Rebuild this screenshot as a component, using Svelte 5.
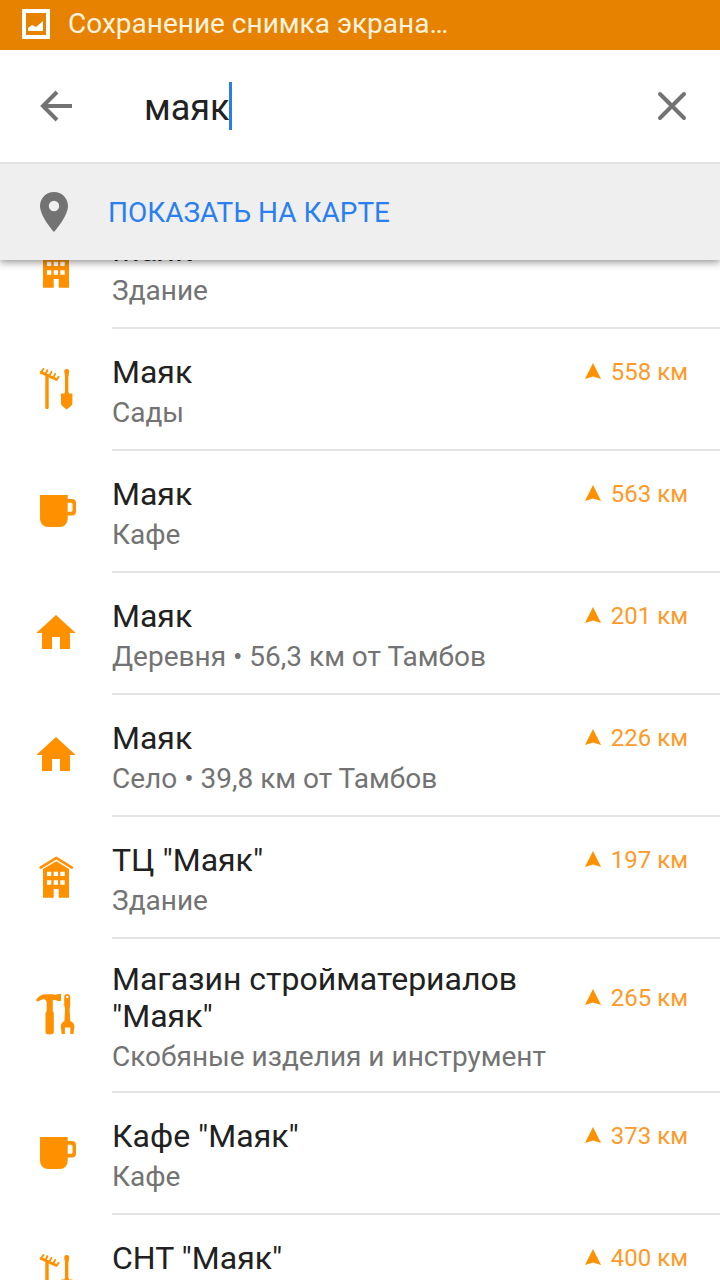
<script lang="ts">
	type Kind = 'building' | 'garden' | 'cafe' | 'house' | 'tools';

	interface Place {
		kind: Kind;
		title: string;
		note: string;
		distance: string;
	}

	let query = $state('маяк');

	const places: Place[] = [
		{ kind: 'building', title: 'Маяк', note: 'Здание', distance: '' },
		{ kind: 'garden', title: 'Маяк', note: 'Сады', distance: '558 км' },
		{ kind: 'cafe', title: 'Маяк', note: 'Кафе', distance: '563 км' },
		{ kind: 'house', title: 'Маяк', note: 'Деревня • 56,3 км от Тамбов', distance: '201 км' },
		{ kind: 'house', title: 'Маяк', note: 'Село • 39,8 км от Тамбов', distance: '226 км' },
		{ kind: 'building', title: 'ТЦ "Маяк"', note: 'Здание', distance: '197 км' },
		{
			kind: 'tools',
			title: 'Магазин стройматериалов "Маяк"',
			note: 'Скобяные изделия и инструмент',
			distance: '265 км'
		},
		{ kind: 'cafe', title: 'Кафе "Маяк"', note: 'Кафе', distance: '373 км' },
		{ kind: 'garden', title: 'СНТ "Маяк"', note: 'Сады', distance: '400 км' }
	];
</script>

<div class="app">
	<div class="status">
		<svg width="28" height="30" viewBox="0 0 28 30" aria-hidden="true">
			<path fill="#fff" fill-rule="evenodd" d="M0 0h28v30H0zM4 4v22h20V4z" />
			<path fill="#fff" d="M6 22v-3l4-3 4 2 7-6v10z" />
		</svg>
		<span>Сохранение снимка экрана…</span>
	</div>

	<header>
		<form class="search" onsubmit={(e) => e.preventDefault()}>
			<button type="button" class="icon-button" aria-label="Назад">
				<svg width="48" height="48" viewBox="0 0 48 48">
					<path d="M40 24H11M25 10 11 24l14 14" />
				</svg>
			</button>
			<div class="field">
				<input type="text" aria-label="Поиск" bind:value={query} />
				<span class="caret"></span>
			</div>
			<button type="button" class="icon-button" aria-label="Очистить" onclick={() => (query = '')}>
				<svg width="48" height="48" viewBox="0 0 48 48">
					<path d="M12 12l24 24M36 12 12 36" stroke-linecap="round" />
				</svg>
			</button>
		</form>
		<button type="button" class="show-map">
			<svg width="48" height="48" viewBox="0 0 24 24" aria-hidden="true">
				<path
					fill="#737373"
					d="M12 2C8.100 2 5 5.100 5 9c0 5.200 7 13 7 13s7-7.800 7-13c0-3.900-3.100-7-7-7zm0 9.600a2.600 2.600 0 1 1 0-5.200 2.600 2.600 0 0 1 0 5.200z"
				/>
			</svg>
			<span>ПОКАЗАТЬ НА КАРТЕ</span>
		</button>
	</header>

	<main>
		<ul>
			{#each places as place}
				<li>
					<button type="button" class="place">
						<svg class="kind" width="48" height="48" viewBox="0 0 48 48" aria-hidden="true">
							{#if place.kind === 'building'}
								<path d="M24.300 3.500 41.500 14l-1.400 2.200-15.800-9.600L8.400 16.200 7 14z" />
								<path
									fill-rule="evenodd"
									d="M24.300 8.300 37 15.900v28.800H26.700V36h-5v8.700H11V15.900zM15 18.700V23h4.300v-4.300zm6.700 0V23H26v-4.300zm6.600 0V23h4.400v-4.300zM15 27.300v4.400h4.300v-4.400zm6.700 0v4.400H26v-4.400zm6.600 0v4.400h4.400v-4.400z"
								/>
							{:else if place.kind === 'garden'}
								<g fill="none" stroke="#ff9100" stroke-linecap="round">
									<path stroke-width="3.400" d="M15 12v30.500" />
									<path stroke-width="2.600" d="m9 7.500 15.500 7" />
									<path
										stroke-width="2"
										d="m9 7.500 2.500-3.500M12.500 9q1.700-.500 2.900-3.700M16.300 10.700q1.900-.500 3.100-3.700M20.300 12.500q1.700-.500 2.900-3.500M24.300 14.300q1.200-.300 2.200-2.500"
									/>
									<path stroke-width="3.400" d="M34.700 6v23" />
								</g>
								<path
									d="M32.200 6.500a2.500 2.500 0 0 1 5 0l-.8 4.500h-3.400zM32.500 27.500h4.400v1h3.500V38c0 3-3.400 4.300-5.700 6.500C32.400 42.300 29 41 29 38v-9.500h3.500z"
								/>
							{:else if place.kind === 'cafe'}
								<path
									fill-rule="evenodd"
									d="M8 8h27.700v4H40a4 4 0 0 1 4 4v8.500a4 4 0 0 1-4 4h-4.300V32a8 8 0 0 1-8 8H16a8 8 0 0 1-8-8zm27.700 7.700v9H39a1.500 1.500 0 0 0 1.500-1.500v-6a1.500 1.500 0 0 0-1.500-1.500z"
								/>
							{:else if place.kind === 'house'}
								<path d="m24 6 19.700 18H38v16H28V28h-8v12H10V24H4.300z" />
							{:else}
								<path
									d="M4 9C7 5 10 3.300 14 3.300h6c2 0 2.500 1.200 4 .500l2-.800h3v7h-3c-2-1-3.500-1.300-5.200-1V20l1 2v19.500c0 2.500-8.300 2.500-8.300 0V22l1.200-2v-8c0-3-2-4.300-4.300-3.500-2.200.400-3.700 2-5.100 2z"
								/>
								<path
									fill-rule="evenodd"
									d="M32.200 6.300c0-4.300 6-4.300 6 0v8l-.6 4 .7 11.700c2.800 1.300 4.100 3 4.100 5.500l-.9 7.500h-3.200v-6.500h-5.400V43h-3.200l-.9-7.500c0-2.500 1.300-4.200 3.600-5.500l.7-11.700-.9-4zm3-1.500a1.200 1.200 0 1 0 0 2.400 1.200 1.200 0 0 0 0-2.400z"
								/>
							{/if}
						</svg>
						<span class="body">
							<span class="text">
								<span class="title">{place.title}</span>
								<span class="note">{place.note}</span>
							</span>
							{#if place.distance}
								<span class="distance">
									<svg width="16" height="18" viewBox="0 0 16 18" aria-hidden="true">
										<path d="m8 0 8 16-8-2.500L0 16z" />
									</svg>
									{place.distance}
								</span>
							{/if}
						</span>
					</button>
				</li>
			{/each}
		</ul>
	</main>
</div>

<style>
	:global(body) {
		margin: 0;
		background: #fff;
	}
	.app {
		display: flex;
		flex-direction: column;
		height: 100vh;
		overflow: hidden;
		font-family: Roboto, 'Noto Sans', sans-serif;
		color: #212121;
	}
	button,
	input {
		border: 0;
		padding: 0;
		background: none;
		font: inherit;
		color: inherit;
		outline: none;
	}
	svg {
		display: block;
		flex: none;
	}

	.status {
		display: flex;
		position: relative;
		z-index: 2;
		flex: none;
		align-items: center;
		gap: 18px;
		box-sizing: border-box;
		height: 50px;
		padding: 0 22px 3px;
		background: #e68200;
		color: #fff3df;
		font-size: 28px;
	}

	header {
		position: relative;
		z-index: 1;
		flex: none;
		box-shadow: 0 2px 8px rgba(0, 0, 0, 0.45);
	}
	.search {
		display: flex;
		align-items: center;
		height: 112px;
		padding: 0 24px 0 32px;
		background: #fff;
		border-bottom: 2px solid #e2e2e2;
	}
	.icon-button path {
		fill: none;
		stroke: #737373;
		stroke-width: 4;
	}
	.field {
		display: flex;
		flex: 1;
		align-items: center;
		min-width: 0;
		padding-left: 64px;
	}
	.field input {
		field-sizing: content;
		box-sizing: border-box;
		height: 48px;
		padding-top: 4px;
		font-size: 36px;
		caret-color: transparent;
	}
	.caret {
		width: 3px;
		height: 48px;
		margin-left: -1px;
		background: #2a7de1;
	}
	.show-map {
		display: flex;
		align-items: center;
		gap: 30px;
		width: 100%;
		height: 96px;
		padding: 0 30px;
		background: #efefef;
		color: #2a7ff0;
		font-size: 28px;
	}

	main {
		flex: 1;
		min-height: 0;
		overflow: hidden;
	}
	/* list is scrolled so the first row sits half under the header */
	ul {
		margin: -53px 0 0;
		padding: 0;
		list-style: none;
	}
	.place {
		display: flex;
		align-items: stretch;
		gap: 32px;
		width: 100%;
		padding-left: 32px;
		text-align: left;
	}
	.kind {
		align-self: center;
		padding-bottom: 2px;
		fill: #ff9100;
	}
	.body {
		display: flex;
		flex: 1;
		align-items: center;
		gap: 32px;
		box-sizing: border-box;
		min-height: 122px;
		padding: 22px 32px 18px 0;
		border-bottom: 2px solid #e4e4e4;
	}
	.text {
		display: flex;
		flex: 1;
		flex-direction: column;
		gap: 5px;
	}
	.title {
		font-size: 32px;
		line-height: 37px;
	}
	.note {
		color: #737373;
		font-size: 28px;
		line-height: 33px;
	}
	.distance {
		display: flex;
		align-items: center;
		gap: 10px;
		padding-bottom: 38px;
		color: #ff9a2a;
		font-size: 24px;
		white-space: nowrap;
	}
	.distance svg {
		fill: #ff9100;
	}
</style>
